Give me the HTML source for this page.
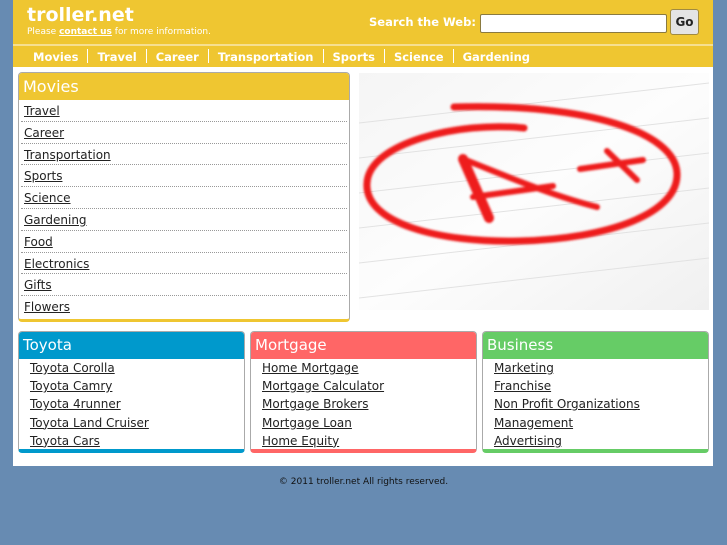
<!DOCTYPE html>
<html><head><style>
*{margin:0;padding:0;box-sizing:border-box}
body{width:727px;height:545px;background:#678bb2;font-family:"DejaVu Sans",Verdana,sans-serif;position:relative;overflow:hidden;color:#222}
.wrap{position:absolute;left:13px;top:0;width:700px;height:466px;background:#fff}
.hdr{position:absolute;left:13px;top:0;width:700px;height:44px;background:#efc631}
.logo{position:absolute;left:14px;top:4px;color:#fff;font-size:19px;font-weight:bold}
.sub{position:absolute;left:14px;top:27px;color:#fff;font-size:9px}
.sub b{text-decoration:underline}
.sl{position:absolute;left:356px;top:15px;color:#fff;font-size:11.5px;font-weight:bold}
.inp{position:absolute;left:467px;top:14px;width:187px;height:19px;background:#fff;border:1px solid #8a7a40;border-radius:2px}
.go{position:absolute;left:657px;top:9px;width:29px;height:26px;background:#e4e4e4;border:1px solid #a08a40;border-radius:3px;font-size:12px;font-weight:bold;text-align:center;line-height:24px;color:#222}
.line{position:absolute;left:13px;top:44px;width:700px;height:2px;background:#f6df90}
.nav{position:absolute;left:13px;top:46px;width:700px;height:21px;background:#efc631;color:#fff;font-size:11.5px;font-weight:bold;padding-left:20px;line-height:23px;white-space:nowrap}
.nav span.s{display:inline-block;width:1px;height:14px;background:#fff;margin:0 9px;vertical-align:-2px}
.box{position:absolute;border:1px solid #aaa;border-radius:4px;overflow:hidden;background:#fff}
.box h2{color:#fff;font-size:15px;font-weight:normal;height:27px;line-height:27px;padding-left:4px}
.mv a{display:block;height:21.8px;line-height:22px;padding-left:3px;font-size:12px;color:#222;text-decoration:underline;border-bottom:1px dotted #999}
.sm a{display:block;height:18.2px;line-height:17px;padding-left:11px;font-size:12px;color:#222;text-decoration:underline}
.foot{position:absolute;left:0;width:727px;top:477px;text-align:center;font-size:9px;color:#111}
</style></head><body>
<div class="wrap"></div>
<div class="hdr"><div class="logo">troller.net</div><div class="sub">Please <b>contact us</b> for more information.</div>
<div class="sl">Search the Web:</div><div class="inp"></div><div class="go">Go</div></div>
<div class="line"></div>
<div class="nav">Movies<span class="s"></span>Travel<span class="s"></span>Career<span class="s"></span>Transportation<span class="s"></span>Sports<span class="s"></span>Science<span class="s"></span>Gardening</div>

<div class="box mv" style="left:18px;top:72px;width:332px;height:250px;border-bottom:3px solid #efc631">
<h2 style="background:#efc631;font-size:16px">Movies</h2>
<div style="padding:0 2px">
<a>Travel</a><a>Career</a><a>Transportation</a><a>Sports</a><a>Science</a><a>Gardening</a><a>Food</a><a>Electronics</a><a>Gifts</a><a style="border-bottom:none">Flowers</a></div></div>

<svg style="position:absolute;left:359px;top:73px" width="350" height="237" viewBox="0 0 350 237">
<defs><linearGradient id="g" x1="0" y1="0" x2="1" y2="1"><stop offset="0" stop-color="#f5f5f5"/><stop offset=".5" stop-color="#fdfdfd"/><stop offset="1" stop-color="#f0f0f0"/></linearGradient>
<filter id="b"><feGaussianBlur stdDeviation="1"/></filter></defs>
<rect width="350" height="237" fill="url(#g)"/>
<g stroke="#e2e2e2" stroke-width="1" fill="none">
<path d="M0 50 L350 10"/><path d="M0 85 L350 45"/><path d="M0 120 L350 80"/><path d="M0 155 L350 115"/><path d="M0 190 L350 150"/><path d="M0 225 L350 185"/></g>
<g fill="none" stroke="#ee1c1c" stroke-linecap="round" filter="url(#b)">
<path d="M165 55 C100 48 10 70 8 110 C5 150 80 170 160 168 C250 166 320 140 318 100 C316 60 230 30 95 34" stroke-width="7"/>
<path d="M104 86 L130 145" stroke-width="10"/>
<path d="M104 86 C140 100 190 122 238 134" stroke-width="6"/>
<path d="M114 124 L194 113" stroke-width="6"/>
<path d="M221 96 L284 87" stroke-width="6"/>
<path d="M248 78 L278 107" stroke-width="6"/>
</g></svg>

<div class="box sm" style="left:18px;top:331px;width:227px;height:122px;border-bottom:4px solid #0099cc"><h2 style="background:#0099cc">Toyota</h2><div style="padding-top:1px"><a>Toyota Corolla</a><a>Toyota Camry</a><a>Toyota 4runner</a><a>Toyota Land Cruiser</a><a>Toyota Cars</a></div></div>
<div class="box sm" style="left:250px;top:331px;width:227px;height:122px;border-bottom:4px solid #ff6666"><h2 style="background:#ff6666">Mortgage</h2><div style="padding-top:1px"><a>Home Mortgage</a><a>Mortgage Calculator</a><a>Mortgage Brokers</a><a>Mortgage Loan</a><a>Home Equity</a></div></div>
<div class="box sm" style="left:482px;top:331px;width:227px;height:122px;border-bottom:4px solid #66cc66"><h2 style="background:#66cc66">Business</h2><div style="padding-top:1px"><a>Marketing</a><a>Franchise</a><a>Non Profit Organizations</a><a>Management</a><a>Advertising</a></div></div>

<div class="foot">© 2011 troller.net All rights reserved.</div>
</body></html>
